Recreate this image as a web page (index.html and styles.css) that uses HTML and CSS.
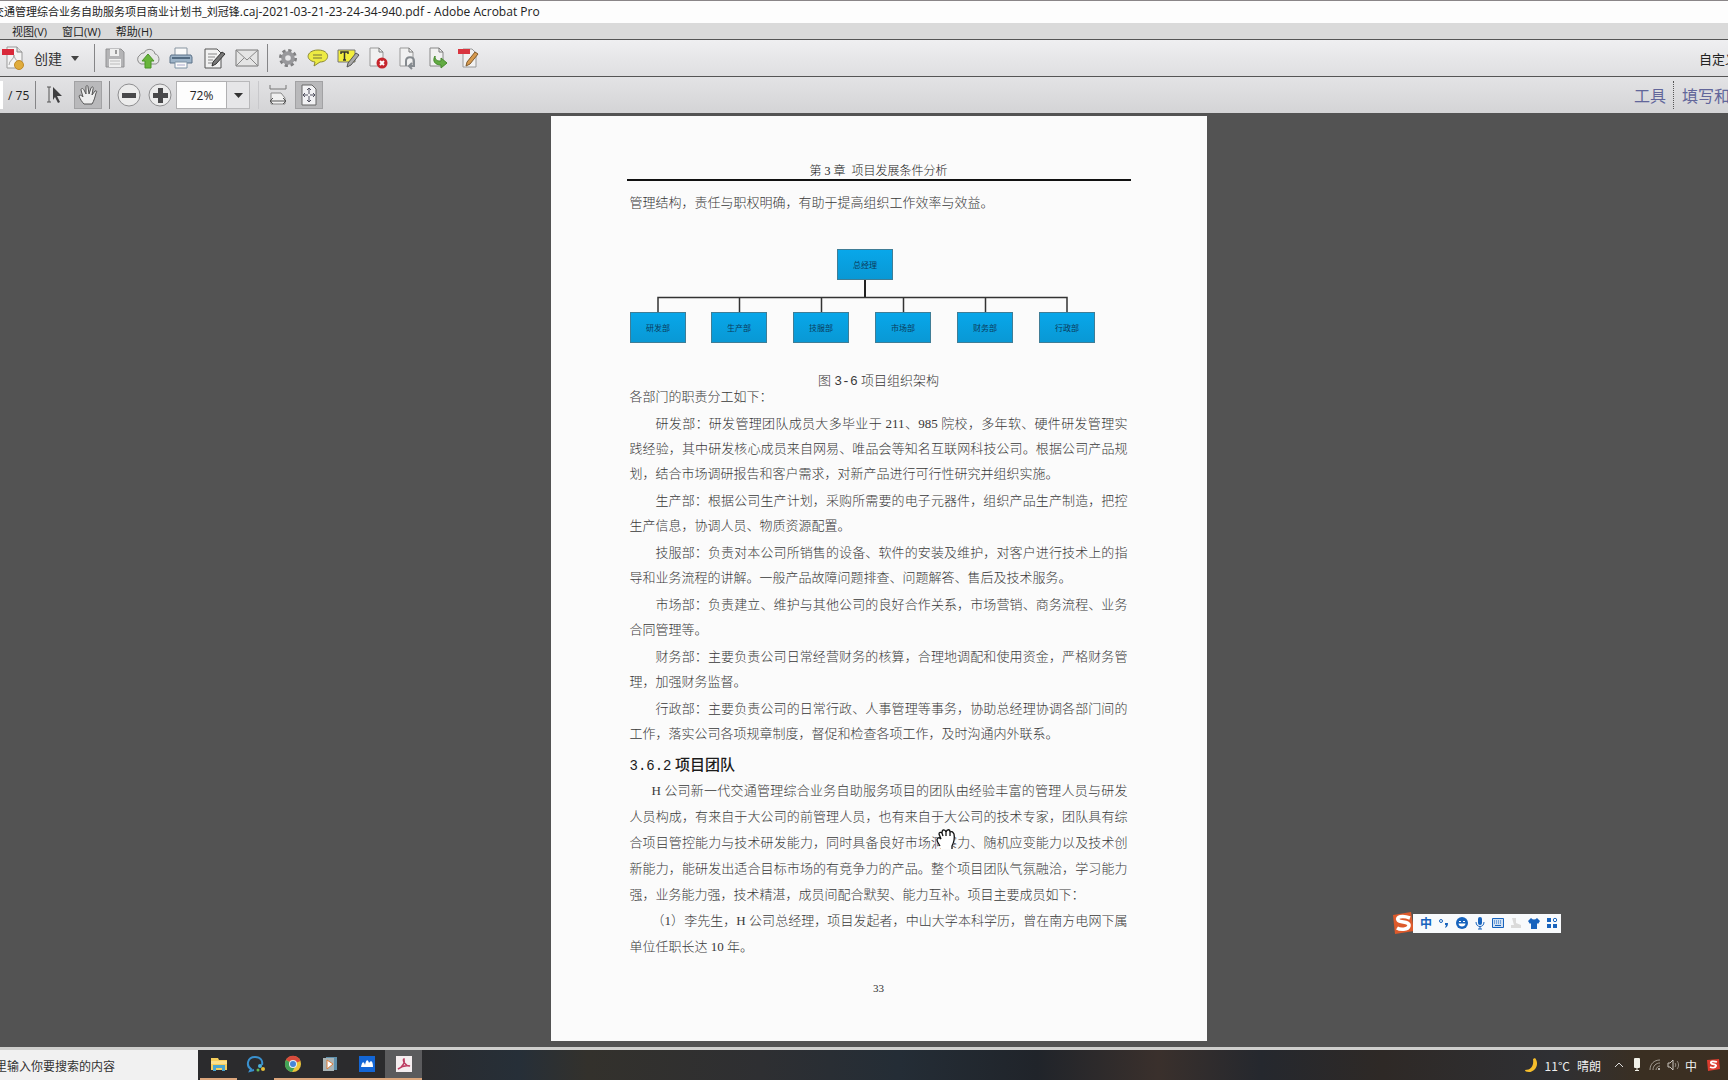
FILE: index.html
```html
<!DOCTYPE html>
<html lang="zh-CN">
<head>
<meta charset="utf-8">
<title>商业计划书 - Adobe Acrobat Pro</title>
<link rel="stylesheet" href="styles.css">
</head>
<body>
<header class="titlebar"><span class="titlebar-text">交通管理综合业务自助服务项目商业计划书_刘冠锋<span class="titlebar-file">.caj-2021-03-21-23-24-34-940.pdf - Adobe Acrobat Pro</span></span></header>

<nav class="menubar">
  <button class="menu">视图(V)</button>
  <button class="menu">窗口(W)</button>
  <button class="menu">帮助(H)</button>
</nav>

<div class="toolbar toolbar-main">
  <button class="create">
    <svg width="24" height="26" viewBox="0 0 24 26"><path d="M6 2h10l5 5v16H6z" fill="#f4f4f4" stroke="#999"/><path d="M16 2v5h5" fill="#ddd" stroke="#888"/><path d="M1 4h12v6H1z" fill="#d9293a"/><path d="M8 20c0-5 5-5 5-10 1 5 3 6 6 7" fill="none" stroke="#aaa"/><circle cx="18" cy="20" r="4.500" fill="#e0ac3c" stroke="#c08a28"/></svg>
    <span class="create-label">创建</span>
    <svg width="8" height="5" viewBox="0 0 8 5"><path d="M0 0h8L4 5z" fill="#444"/></svg>
  </button>
  <span class="sep"></span>
  <div class="group">
    <button class="tool" aria-label="保存"><svg width="22" height="24" viewBox="0 0 22 24"><path d="M2 3h15l3 3v15H2z" fill="#b4b4b6" stroke="#929294"/><path d="M6 3h9v7H6z" fill="#eee"/><path d="M11 4h2v4h-2z" fill="#999"/><path d="M5 13h12v8H5z" fill="#efefef"/><path d="M6 15h10M6 18h10" stroke="#bbb"/></svg></button>
    <button class="tool" aria-label="上传"><svg width="26" height="24" viewBox="0 0 26 24"><path d="M6 18a5 5 0 0 1-1-9c1-2 3-2 4-2 2-5 10-5 11 1 4 0 6 8 1 10z" fill="#e6e6e6" stroke="#8b8b8b"/><path d="M13 8l6 7h-3v7h-6v-7H7z" fill="#69b53c" stroke="#4a9427"/></svg></button>
    <button class="tool" aria-label="打印"><svg width="24" height="24" viewBox="0 0 24 24"><path d="M6 2h12v8H6z" fill="#fafafa" stroke="#8794a0"/><path d="M2 9h20l1 2v6H1v-6z" fill="#9eb4c8" stroke="#5d7389"/><path d="M3 12h18" stroke="#536b82" stroke-width="2"/><path d="M6 16h12v6H6z" fill="#fafafa" stroke="#7f93a5"/><path d="M8 19h8" stroke="#aac"/></svg></button>
    <button class="tool" aria-label="签名"><svg width="24" height="24" viewBox="0 0 24 24"><path d="M3 3h12l4 4v15H3z" fill="#f2f2f2" stroke="#555"/><path d="M6 8h9M6 11h7M6 14h5M6 17h4" stroke="#888"/><path d="M20 6l3 2-9 10-4 2 1-4z" fill="#777" stroke="#333"/></svg></button>
    <button class="tool" aria-label="邮件"><svg width="26" height="20" viewBox="0 0 26 20"><path d="M2 2h22v16H2z" fill="#e5e5e5" stroke="#777"/><path d="M2 2l11 10L24 2M2 18l8-8M24 18l-8-8" fill="none" stroke="#888"/></svg></button>
  </div>
  <span class="sep"></span>
  <div class="group group-tight">
    <button class="tool" aria-label="设置"><svg width="20" height="20" viewBox="0 0 20 20"><circle cx="10" cy="10" r="7.500" fill="none" stroke="#808082" stroke-width="3" stroke-dasharray="3.200 2.690"/><circle cx="10" cy="10" r="4.800" fill="none" stroke="#98989b" stroke-width="4"/></svg></button>
    <button class="tool" aria-label="注释"><svg width="22" height="20" viewBox="0 0 22 20"><path d="M11 2c13 0 12 12 2 12l-6 4 1-4C-3 12 0 2 11 2z" fill="#edeb43" stroke="#8b8833"/><path d="M6 7h9M6 10h9" stroke="#76743a"/></svg></button>
    <button class="tool" aria-label="高亮"><svg width="24" height="22" viewBox="0 0 24 22"><path d="M2 3h17v12H2z" fill="#f3ee3c" stroke="#777"/><path d="M5 7V5h7v2M8.500 5v8M7 13h3" fill="none" stroke="#333" stroke-width="1.500"/><path d="M20 6l3 2-8 10-4 2 1-4z" fill="#aaa" stroke="#555"/></svg></button>
    <button class="tool" aria-label="删除页面"><svg width="22" height="24" viewBox="0 0 22 24"><path d="M3 2h9l4 4v14H3z" fill="#f1f1f1" stroke="#999"/><path d="M12 2v4h4" fill="none" stroke="#777"/><circle cx="15" cy="17" r="5.500" fill="#c6252c"/><path d="M13 15l4 4m0-4l-4 4" stroke="#fff" stroke-width="2"/></svg></button>
    <button class="tool" aria-label="旋转页面"><svg width="22" height="24" viewBox="0 0 22 24"><path d="M3 2h9l4 4v14H3z" fill="#f1f1f1" stroke="#999"/><path d="M12 2v4h4" fill="none" stroke="#777"/><path d="M9 20v-5c0-5 8-5 8 0v5h-5m3-3l-3 3 3 3" fill="none" stroke="#858a8f" stroke-width="2"/></svg></button>
    <button class="tool" aria-label="导出"><svg width="22" height="24" viewBox="0 0 22 24"><path d="M3 2h9l4 4v14H3z" fill="#f1f1f1" stroke="#888"/><path d="M12 2v4h4" fill="none" stroke="#777"/><path d="M8 10c0 5 3 5 6 5v-3l6 5-6 5v-3c-6 0-9-4-6-9z" fill="#62ab43" stroke="#458a2b"/></svg></button>
    <button class="tool" aria-label="编辑"><svg width="22" height="24" viewBox="0 0 22 24"><path d="M6 3h9l4 4v14H6z" fill="#f1f1f1" stroke="#999"/><path d="M1 3h12v5H1z" fill="#d9353f"/><path d="M18 6l3 2-8 10-4 2 1-4z" fill="#d79a4e" stroke="#805a2c"/></svg></button>
  </div>
  <span class="customize">自定义</span>
</div>

<div class="toolbar toolbar-nav">
  <input class="page-input" type="text" value="" aria-label="页码">
  <span class="page-total">/ 75</span>
  <span class="sep"></span>
  <button class="nav-tool" aria-label="选择"><svg width="18" height="20" viewBox="0 0 18 20"><path d="M1 2h4M3 2v15M1 17h4" stroke="#555" fill="none"/><path d="M7 2l9 9h-5l3 6-2 1-3-6-2 3z" fill="#3e3e40"/></svg></button>
  <button class="nav-tool is-on" aria-label="手形"><svg width="22" height="22" viewBox="0 0 22 22"><path d="M7 20c-2-2-4-5-5-8 1-2 3 0 4 1L4 6c0-2 2-2 3 0l2 4V3c0-2 2-2 2 0l1 7 2-6c1-2 3-1 2 1l-1 6 3-4c2-1 2 1 1 2-1 4-2 8-4 11z" fill="#eee" stroke="#555"/></svg></button>
  <span class="sep"></span>
  <button class="zoom-btn" aria-label="缩小"><svg width="24" height="24" viewBox="0 0 24 24"><circle cx="12" cy="12" r="11" fill="#ececec" stroke="#8e8e90"/><path d="M5 10h14v5H5z" fill="#48484a"/></svg></button>
  <button class="zoom-btn" aria-label="放大"><svg width="24" height="24" viewBox="0 0 24 24"><circle cx="12" cy="12" r="11" fill="#ececec" stroke="#8e8e90"/><path d="M5 10h5V5h5v5h5v5h-5v5h-5v-5H5z" fill="#48484a"/></svg></button>
  <input class="zoom-value" type="text" value="72%" aria-label="缩放">
  <button class="zoom-menu" aria-label="缩放列表"><svg width="9" height="5" viewBox="0 0 9 5"><path d="M0 0h9L4.500 5z" fill="#333"/></svg></button>
  <span class="sep sep-light"></span>
  <button class="nav-tool nav-fit" aria-label="适合宽度"><svg width="20" height="22" viewBox="0 0 20 22"><path d="M2 1v4h16V1" fill="none" stroke="#777"/><path d="M3 20V9h10l4 5v6z" fill="#f0f0f0" stroke="#888"/><path d="M2 17h16M5 14l-3 3 3 3M15 14l3 3-3 3" fill="none" stroke="#555"/></svg></button>
  <button class="nav-tool is-on" aria-label="适合页面"><svg width="20" height="22" viewBox="0 0 20 22"><path d="M3 1h10l4 4v16H3z" fill="#f2f2f4" stroke="#666"/><path d="M10 4v14M4 11h12M8 6l2-2 2 2M8 16l2 2 2-2M6 9l-2 2 2 2M14 9l2 2-2 2" fill="none" stroke="#50505e"/><path d="M9 10h2v2H9z" fill="#f2f2f4"/></svg></button>
  <div class="panes">
    <button class="pane">工具</button>
    <button class="pane pane-fill">填写和签名</button>
  </div>
</div>

<main class="viewer">
  <article class="page">
    <div class="running-head">第 3 章&nbsp; 项目发展条件分析</div>
    <div class="copy">
      <p class="flush">管理结构，责任与职权明确，有助于提高组织工作效率与效益。</p>
      <svg class="org" width="466" height="95" viewBox="0 0 466 95">
        <defs><linearGradient id="box" x1="0" y1="0" x2="0" y2="1"><stop offset="0" stop-color="#08a7ea"/><stop offset="1" stop-color="#0998d4"/></linearGradient></defs>
        <path d="M235 30v19" stroke="#222" stroke-width="2"/>
        <path d="M28 63V48.500H437V63M109.500 48v15M191.500 48v15M273.500 48v15M355.500 48v15" fill="none" stroke="#333" stroke-width="1.500"/>
        <g fill="url(#box)" stroke="#3f7d96">
          <rect x="207.500" y=".5" width="55" height="30"/>
          <rect x=".5" y="63.500" width="55" height="30"/>
          <rect x="81.500" y="63.500" width="55" height="30"/>
          <rect x="163.500" y="63.500" width="55" height="30"/>
          <rect x="245.500" y="63.500" width="55" height="30"/>
          <rect x="327.500" y="63.500" width="55" height="30"/>
          <rect x="409.500" y="63.500" width="55" height="30"/>
        </g>
        <g class="org-label">
          <text x="235" y="19">总经理</text>
          <text x="28" y="82">研发部</text>
          <text x="109" y="82">生产部</text>
          <text x="191" y="82">技服部</text>
          <text x="273" y="82">市场部</text>
          <text x="355" y="82">财务部</text>
          <text x="437" y="82">行政部</text>
        </g>
      </svg>
      <p class="caption">图 <span class="mono">3-6</span> 项目组织架构</p>
      <div class="duties">
        <p class="flush">各部门的职责分工如下：</p>
        <p>研发部：研发管理团队成员大多毕业于 211、985 院校，多年软、硬件研发管理实践经验，其中研发核心成员来自网易、唯品会等知名互联网科技公司。根据公司产品规划，结合市场调研报告和客户需求，对新产品进行可行性研究并组织实施。</p>
        <p>生产部：根据公司生产计划，采购所需要的电子元器件，组织产品生产制造，把控生产信息，协调人员、物质资源配置。</p>
        <p>技服部：负责对本公司所销售的设备、软件的安装及维护，对客户进行技术上的指导和业务流程的讲解。一般产品故障问题排查、问题解答、售后及技术服务。</p>
        <p>市场部：负责建立、维护与其他公司的良好合作关系，市场营销、商务流程、业务合同管理等。</p>
        <p>财务部：主要负责公司日常经营财务的核算，合理地调配和使用资金，严格财务管理，加强财务监督。</p>
        <p>行政部：主要负责公司的日常行政、人事管理等事务，协助总经理协调各部门间的工作，落实公司各项规章制度，督促和检查各项工作，及时沟通内外联系。</p>
      </div>
      <h2><span class="number">3.6.2</span> 项目团队</h2>
      <div class="team">
        <p>H 公司新一代交通管理综合业务自助服务项目的团队由经验丰富的管理人员与研发人员构成，有来自于大公司的前管理人员，也有来自于大公司的技术专家，团队具有综合项目管控能力与技术研发能力，同时具备良好市场洞察力、随机应变能力以及技术创新能力，能研发出适合目标市场的有竞争力的产品。整个项目团队气氛融洽，学习能力强，业务能力强，技术精湛，成员间配合默契、能力互补。项目主要成员如下：</p>
        <p>（1）李先生，H 公司总经理，项目发起者，中山大学本科学历，曾在南方电网下属单位任职长达 10 年。</p>
      </div>
    </div>
    <div class="folio">33</div>
    <svg class="hand" width="20" height="22" viewBox="0 0 20 22"><path d="M5 21c0-3-4-5-4-9 0-2 2-3 4-1L3 6c0-2 2-2 3-1 0-4 3-4 4-1 1-3 4-3 4 0 2-1 3 0 4 2 2 6 0 9-2 13v2z" fill="#fff"/><path d="M4 18c-1-2-3-4-3-6s2-3 4-1L3 6c0-2 2-2 3-1l1 3M6 5c0-4 3-4 4-1v4M10 4c1-3 4-3 4 0v4M14 4c2-1 3 0 4 2 1 5 0 8-2 12v3" fill="none" stroke="#111" stroke-width="1.300"/></svg>
  </article>
</main>

<footer class="taskbar">
  <input class="search" type="text" value="里输入你要搜索的内容" aria-label="搜索">
  <div class="apps">
    <button class="app is-open" aria-label="文件"><svg width="18" height="16" viewBox="0 0 18 16"><path d="M1 2h7l1 2h8v10H1z" fill="#f6ce5c"/><path d="M1 5h16v3H1z" fill="#fbe08c"/><path d="M3 9h12v6h-3v-3H6v3H3z" fill="#4aa6cf"/></svg></button>
    <button class="app" aria-label="聊天"><svg width="20" height="18" viewBox="0 0 20 18"><path d="M9 2C1 2 0 11 5 14l-1 2 4-1M9 2c6 0 8 4 7 8" fill="none" stroke="#3a91cf" stroke-width="2"/><circle cx="14" cy="11" r="2" fill="#4cb2d9"/><circle cx="17" cy="14" r="2" fill="#e5bd38"/><circle cx="12" cy="15" r="1.500" fill="#65b950"/></svg></button>
    <button class="app is-open" aria-label="浏览器"><svg width="18" height="18" viewBox="0 0 18 18"><circle cx="9" cy="9" r="8" fill="#eac43b"/><path d="M9 9L2 5a8 8 0 0 1 14.500 1z" fill="#d94b3d"/><path d="M9 9L2 5a8 8 0 0 0 6 12l3-5z" fill="#43a257"/><circle cx="9" cy="9" r="4" fill="#e8eef4"/><circle cx="9" cy="9" r="3" fill="#4586d8"/></svg></button>
    <button class="app is-open" aria-label="播放器"><svg width="16" height="16" viewBox="0 0 16 16"><path d="M4 1h11v13H4z" fill="#5f90ac"/><path d="M1 2h11v13H1z" fill="#a9b4b6"/><path d="M5 4l6 4-6 5z" fill="#fff" stroke="#dc7c38"/></svg></button>
    <button class="app is-open" aria-label="会议"><svg width="16" height="16" viewBox="0 0 16 16"><path d="M0 0h16v16H0z" fill="#1366d6"/><path d="M2 11c1-6 3-6 4-2 1-6 3-6 4-2 2-3 4-2 4 4z" fill="#fff"/></svg></button>
    <button class="app is-open is-active" aria-label="Acrobat"><svg width="16" height="16" viewBox="0 0 16 16"><path d="M0 0h16v16H0z" fill="#f5eef0"/><path d="M2 13c5-2 7-7 6-10-2 1 1 7 6 7-4-1-8 0-12 3z" fill="none" stroke="#bd3d62" stroke-width="1.500"/></svg></button>
  </div>
  <div class="tray">
    <button class="weather">
      <svg width="14" height="16" viewBox="0 0 14 16"><path d="M11 1c5 6 0 14-6 14-3 0-4-1-4-2 6 0 9-4 8-11z" fill="#f5bd2b"/></svg>
      <span>11°C</span><span>晴朗</span>
    </button>
    <button class="tray-item" aria-label="展开"><svg width="10" height="6" viewBox="0 0 10 6"><path d="M1 5l4-4 4 4" fill="none" stroke="#ddd"/></svg></button>
    <button class="tray-item" aria-label="麦克风"><svg width="8" height="14" viewBox="0 0 8 14"><rect x="1" width="6" height="10" rx="1" fill="#f2f2ea"/><path d="M4 10v2M2 12.500h4" stroke="#f2f2ea"/></svg></button>
    <button class="tray-item" aria-label="网络"><svg width="12" height="12" viewBox="0 0 12 12"><path d="M1 11C1 5 5 1 11 1M4 11c0-4 3-7 7-7M7 11c0-2 2-4 4-4" fill="none" stroke="#a39c93"/><circle cx="10" cy="10" r="1" fill="#ddd"/></svg></button>
    <button class="tray-item" aria-label="音量"><svg width="12" height="12" viewBox="0 0 12 12"><path d="M1 4h2l3-3v10L3 8H1z" fill="none" stroke="#c9c4bb"/><path d="M8 4c1 1 1 3 0 4M10 2c2 2 2 6 0 8" fill="none" stroke="#968f85"/></svg></button>
    <button class="tray-item tray-ime">中</button>
    <button class="tray-item tray-sogou" aria-label="输入法"><svg width="14" height="12" viewBox="0 0 14 12"><path d="M1 1l12-1 1 10-12 2z" fill="#dc3c2e"/><path d="M11 3c-3-1-7-1-6 1 1 2 6 1 5 3s-4 2-6 1" fill="none" stroke="#fff" stroke-width="1.800"/></svg></button>
  </div>
</footer>

<div class="ime">
  <svg class="ime-logo" width="24" height="24" viewBox="0 0 24 24"><path d="M2 4l18-3 3 19-19 3z" fill="#dd5a2b"/><path d="M19 7C11 4 5 6 7 9c2 3 12 1 11 6-1 4-9 4-12 2" fill="none" stroke="#fff" stroke-width="3.500"/></svg>
  <div class="ime-bar">
    <button class="ime-item">中</button>
    <button class="ime-item" aria-label="标点"><svg width="12" height="12" viewBox="0 0 12 12"><circle cx="3" cy="4" r="1.500" fill="none" stroke="#1763bd"/><path d="M7 6h3c0 3-1 4-3 5l1-3H7z" fill="#1763bd"/></svg></button>
    <button class="ime-item" aria-label="表情"><svg width="12" height="12" viewBox="0 0 12 12"><circle cx="6" cy="6" r="6" fill="#1763bd"/><path d="M3 4h2v1H3zM7 4h2v1H7zM2.500 6.500h7c0 4-7 4-7 0z" fill="#fff"/></svg></button>
    <button class="ime-item" aria-label="语音"><svg width="10" height="13" viewBox="0 0 10 13"><rect x="3" width="4" height="8" rx="2" fill="#1763bd"/><path d="M1 5c0 6 8 6 8 0M5 9v3M3 12h4" fill="none" stroke="#1763bd"/></svg></button>
    <button class="ime-item" aria-label="键盘"><svg width="12" height="10" viewBox="0 0 12 10"><path d="M.5.500h11v9H.500z" fill="#cfe0f3" stroke="#1763bd"/><path d="M2 3h8M2 5h8" stroke="#1763bd" stroke-dasharray="1 1"/><path d="M3 7.500h6" stroke="#1763bd"/></svg></button>
    <button class="ime-item" aria-label="手写"><svg width="12" height="12" viewBox="0 0 12 12"><path d="M2 1h4v5l5 2v3H1V8h3z" fill="#dadada"/></svg></button>
    <button class="ime-item" aria-label="皮肤"><svg width="12" height="12" viewBox="0 0 12 12"><path d="M3 1c2 2 4 2 6 0l3 3-2 3-1-1v6H3V6L2 7 0 4z" fill="#1763bd"/></svg></button>
    <button class="ime-item" aria-label="工具箱"><svg width="12" height="12" viewBox="0 0 12 12"><path d="M1 1h4v4H1zM1 7h4v4H1zM7 7h4v4H7z" fill="#1763bd"/><circle cx="9" cy="3" r="1.700" fill="none" stroke="#1763bd"/></svg></button>
  </div>
</div>
</body>
</html>
```
FILE: styles.css
```css
* { box-sizing: border-box; }

body {
  margin: 0;
  min-height: 100vh;
  display: flex;
  flex-direction: column;
  overflow-x: hidden;
  background: #535353;
  color: #222;
  font-family: "Open Sans", "Noto Sans CJK SC", sans-serif;
  font-size: 11px;
}

button, input {
  margin: 0;
  padding: 0;
  border: 0;
  background: none;
  color: inherit;
  font: inherit;
}

button {
  display: flex;
  align-items: center;
  justify-content: center;
  flex: none;
  white-space: nowrap;
}

svg { display: block; flex: none; }

/* Window chrome */
.titlebar {
  height: 23px;
  border-top: 1px solid #8a8688;
  background: #fdfdfd;
  line-height: 22px;
  white-space: nowrap;
  overflow: hidden;
}
.titlebar-text { margin-left: -7px; }
.titlebar-file { font-size: 12px; }

.menubar {
  display: flex;
  gap: 15px;
  height: 16px;
  padding-left: 12px;
  background: #dadada;
}

.toolbar {
  display: flex;
  align-items: center;
  height: 37px;
  border-top: 1px solid #555;
  overflow: hidden;
}
.toolbar-main { background: linear-gradient(#efeff1, #dfdfe1); }
.toolbar-nav { background: linear-gradient(#e3e3e5, #d4d4d6); }

.create { gap: 8px; width: 94px; justify-content: flex-start; padding-left: 1px; color: #333; }
.create-label { width: 30px; font-size: 14px; }
.sep { flex: none; width: 1px; height: 28px; background: #858587; }
.sep-light { background: #c8c8cb; margin-left: 8px; }
.group { display: flex; padding: 0 4px 0 3px; }
.group-tight { padding-left: 5px; }
.tool { width: 33px; height: 30px; }
.group-tight .tool { width: 30px; }
.customize { margin-left: auto; margin-right: -10px; font-size: 13px; white-space: nowrap; }

.page-input { width: 3px; height: 28px; background: #fff; }
.page-total { width: 32px; padding-left: 5px; font-size: 12px; white-space: nowrap; }
.nav-tool { width: 28px; height: 28px; margin-left: 5px; }
.nav-tool + .nav-tool { margin: 0 7px 0 5px; }
.nav-fit + .nav-tool { margin-left: 3px; }
.nav-tool.is-on { background: #b9b9bb; border: 1px solid #a2a2a4; }
.zoom-btn { width: 31px; height: 28px; }
.sep + .zoom-btn { margin-left: 3px; }
.zoom-value {
  width: 51px;
  height: 28px;
  margin-left: 1px;
  border: 1px solid #b0b0b2;
  background: #fdfdfd;
  font-size: 12px;
  text-align: center;
}
.zoom-menu { width: 23px; height: 28px; border: 1px solid #b8b8ba; border-left: 0; background: #e6e6e8; }
.panes { display: flex; height: 28px; margin-left: auto; margin-right: -34px; }
.pane { padding: 0 7px; color: #62669a; font-size: 16px; }
.pane-fill { padding-right: 0; padding-left: 8px; border-left: 1px dotted #555; }

/* Document */
.viewer {
  flex: 1;
  display: flex;
  justify-content: center;
  align-items: flex-start;
  padding: 3px 0 5px 29px;
}

.page {
  position: relative;
  width: 656px;
  padding: 47px 76px 45px;
  background: #fbfbfb;
  color: #383838;
  font-family: "Liberation Serif", "Noto Sans CJK SC", serif;
  font-size: 13px;
  font-weight: 300;
  text-spacing-trim: space-all;
}

.running-head {
  border-bottom: 2px solid #111;
  color: #222;
  font-size: 12px;
  line-height: 16px;
  text-align: center;
}

.copy { padding: 9px 3px 0; line-height: 26px; }
.copy p { margin: 0; text-align: justify; text-indent: 2em; }
.copy p.flush { text-indent: 0; }
.copy p.caption { text-align: center; text-indent: 0; line-height: 18px; }
.org { margin: 33px 0 28px; }
.org-label text {
  fill: #0b3c5c;
  font-family: "Noto Sans CJK SC", sans-serif;
  font-size: 8px;
  font-weight: 400;
  text-anchor: middle;
}
.mono { font-family: "Liberation Mono", monospace; }

.duties { display: grid; gap: 2px; margin-top: -7px; line-height: 25px; }

.copy h2 {
  margin: 6px 0 0;
  color: #1c1c1c;
  font-family: "Noto Sans CJK SC", sans-serif;
  font-size: 15px;
  font-weight: 500;
  line-height: 23px;
}
.number { font-family: "Liberation Mono", monospace; font-size: 14px; }

.copy .team p { text-indent: 22px; }

.folio {
  margin-top: 21px;
  color: #333;
  font-size: 11px;
  line-height: 15px;
  text-align: center;
}

.hand { position: absolute; left: 385px; top: 712px; }

/* Taskbar */
.taskbar {
  display: flex;
  height: 33px;
  border-top: 3px solid #cfcfcd;
  background: linear-gradient(90deg, #2b2b2d 24%, #262f38 30%, #33312c 34%, #2e2f32 44%, #242d36 52%, #20242a 60%, #3a302c 67%, #25282e 73%, #2e2926 80%, #2f3034 90%, #3a2f22 95%, #3c2f22);
  color: #eee;
  font-family: "Noto Sans CJK SC", sans-serif;
  font-size: 12px;
}
.search { width: 198px; text-indent: -5px; background: #f1f1f1; color: #333; }
.apps { display: flex; padding-left: 2px; }
.app { width: 37px; border-bottom: 2px solid transparent; }
.app.is-open { border-bottom-color: #dca67c; }
.app.is-active { background: #5b5b5d; }

.tray { display: flex; margin-left: auto; padding-right: 2px; }
.weather { gap: 7px; margin-right: 9px; }
.tray-item { width: 18px; }
.tray-sogou { width: 26px; }

/* Floating input method bar */
.ime { position: fixed; right: 167px; bottom: 145px; display: flex; align-items: center; }
.ime-logo { margin-right: -2px; }
.ime-bar { display: flex; height: 19px; padding-left: 4px; background: #f8fafc; }
.ime-item { width: 18px; color: #1763bd; font-size: 12px; font-weight: 700; }
```
